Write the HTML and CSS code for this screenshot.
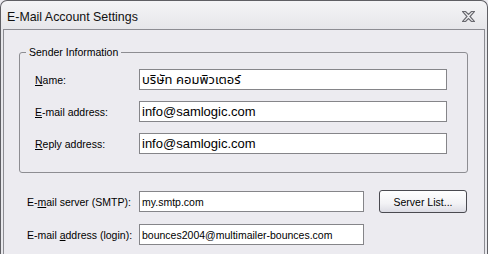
FILE: index.html
```
<!DOCTYPE html>
<html lang="en">
<head>
    <meta charset="UTF-8">
    <title>E-Mail Account Settings</title>
    <link rel="stylesheet" href="styles.css">
</head>
<body>
    <div class="window">
        <div class="titlebar">
            <span class="title">E-Mail Account Settings</span>
            <span class="close">
                <svg width="13" height="11" viewBox="0 0 13 11">
                    <polygon points="0.5,0.5 3.5,0.5 6.5,3.5 9.5,0.5 12.5,0.5 8,5.5 12.5,10.5 9.5,10.5 6.5,7.5 3.5,10.5 0.5,10.5 5,5.5" fill="#f4f4f6" stroke="#6a6a70" stroke-width="1.2"/>
                </svg>
            </span>
        </div>
        <div class="client">
            <fieldset class="group">
                <legend>Sender Information</legend>
                <div class="row">
                    <label><u>N</u>ame:</label>
                    <input type="text" class="big" value="บริษัท คอมพิวเตอร์">
                </div>
                <div class="row">
                    <label><u>E</u>-mail address:</label>
                    <input type="text" class="big" value="info@samlogic.com">
                </div>
                <div class="row">
                    <label><u>R</u>eply address:</label>
                    <input type="text" class="big" value="info@samlogic.com">
                </div>
            </fieldset>
            <div class="server">
                <label>E-<u>m</u>ail server (SMTP):</label>
                <input type="text" value="my.smtp.com">
                <button>Server List...</button>
                <label>E-mail <u>a</u>ddress (login):</label>
                <input type="text" value="bounces2004@multimailer-bounces.com">
            </div>
        </div>
    </div>
</body>
</html>
```
FILE: styles.css
```
body {
    margin: 0;
    font-family: "Liberation Sans", Arial, sans-serif;
    font-size: 10.5px;
    color: #000;
    background: #ecebf0;
}

.window {
    width: 488px;
    height: 254px;
    box-sizing: border-box;
    border: 1px solid #5f5f64;
    border-bottom: none;
    border-radius: 7px 7px 0 0;
    background: linear-gradient(#f4f4f6, #e6e6ea 28px, #e9e9ed);
    display: flex;
    flex-direction: column;
    overflow: hidden;
}

.titlebar {
    height: 28px;
    display: flex;
    align-items: center;
    justify-content: space-between;
    padding: 0 12px 0 6px;
}

.title {
    font-size: 12.4px;
    color: #111;
    padding-top: 3px;
}

.close {
    display: flex;
    padding-top: 3px;
}

.client {
    flex: 1;
    margin: 0 2px;
    border: 1px solid #8c8c92;
    border-bottom: none;
    background: #ecebf0;
}

.group {
    margin: 16px 16px 0 15px;
    padding: 10px 19px 18px 6px;
    border: 1px solid #8d8d92;
    border-radius: 3px;
    min-width: 0;
}

.group legend {
    padding: 0 3px;
    line-height: 13px;
}

.row {
    display: grid;
    grid-template-columns: 104px 308px;
    align-items: center;
    padding-left: 9px;
}

.row + .row {
    margin-top: 11px;
}

input {
    box-sizing: border-box;
    height: 21px;
    margin: 0;
    padding: 0 2px;
    border: 1px solid #858589;
    background: #fff;
    font-family: "Liberation Sans", Arial, "Noto Sans Thai", sans-serif;
    font-size: 10.5px;
    color: #000;
    outline: none;
}

input.big {
    font-size: 13px;
}

.server {
    display: grid;
    grid-template-columns: 112px 225px 103px;
    row-gap: 11px;
    align-items: center;
    margin-top: 17px;
    padding-left: 23px;
}

button {
    height: 23px;
    margin: 0 0 0 15px;
    padding: 0;
    border: 1px solid #4a4a50;
    border-radius: 3px;
    background: linear-gradient(#ffffff, #f2f2f5 60%, #dcdce4);
    font-family: "Liberation Sans", Arial, sans-serif;
    font-size: 10.5px;
    color: #000;
}
```
